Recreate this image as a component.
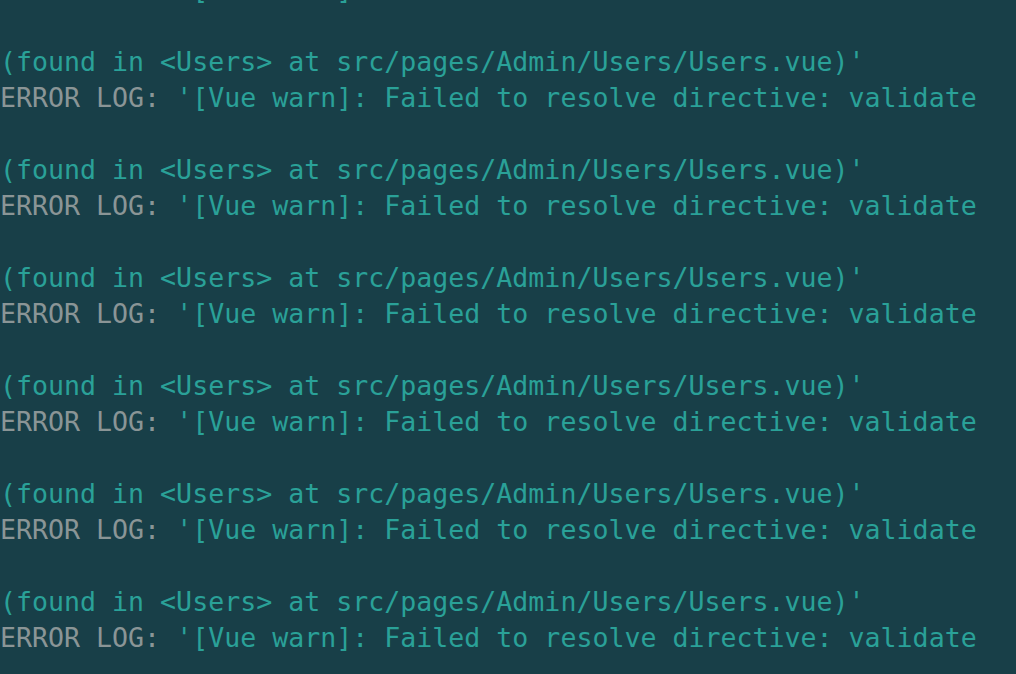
const LOG_LINE = "'[Vue warn]: Failed to resolve directive: validate";
const FOUND_LINE = "(found in <Users> at src/pages/Admin/Users/Users.vue)'";

function ErrorLine() {
  return (
    <div className="whitespace-pre">
      <span className="text-[#8a9596]">ERROR LOG: </span>
      <span className="text-[#2aa198]">{LOG_LINE}</span>
    </div>
  );
}

export default function App() {
  const blocks = [0, 1, 2, 3, 4, 5];
  return (
    <div className="h-[674px] w-[1016px] overflow-hidden bg-[#183f48]">
      <div
        className="mt-[-28px] text-[26.6px] leading-[36px] tracking-normal"
        style={{ fontFamily: '"DejaVu Sans Mono", "Liberation Mono", monospace' }}
      >
        <ErrorLine />
        {blocks.map((i) => (
          <div key={i}>
            <div className="h-[36px]" />
            <div className="whitespace-pre text-[#2aa198]">{FOUND_LINE}</div>
            <ErrorLine />
          </div>
        ))}
        <div className="h-[36px]" />
      </div>
    </div>
  );
}
